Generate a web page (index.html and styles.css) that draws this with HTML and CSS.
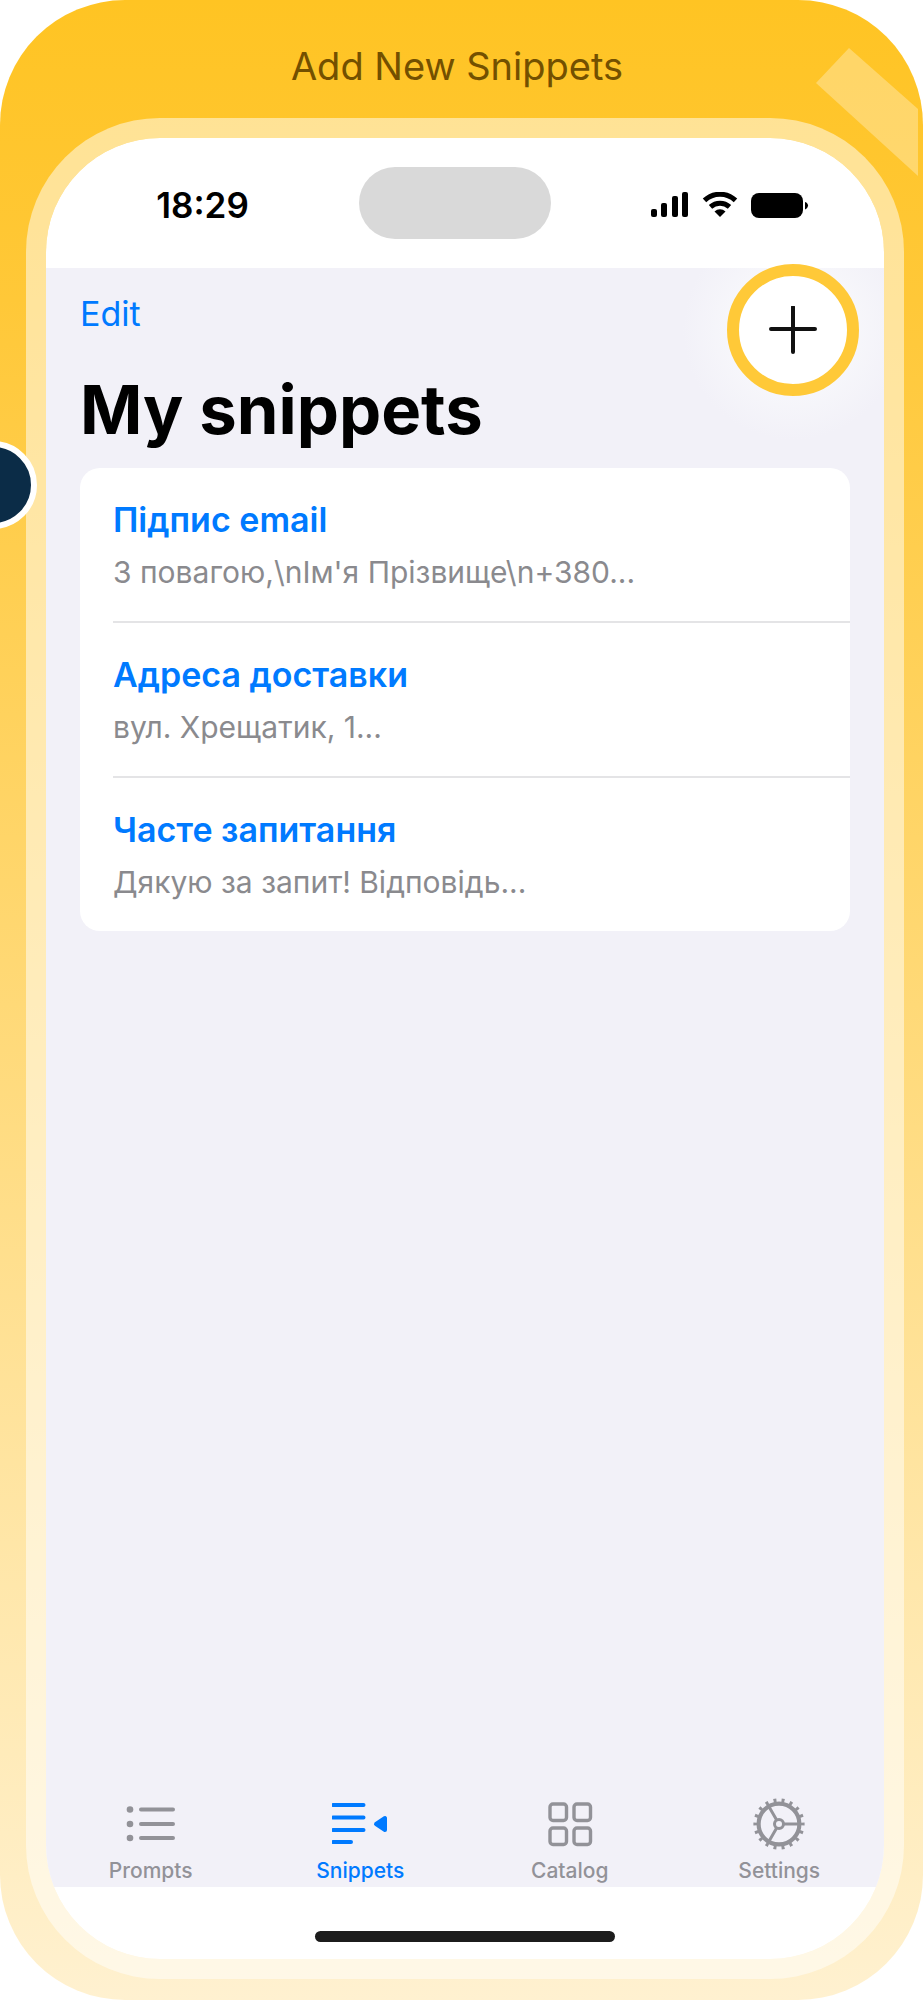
FILE: index.html
```html
<!DOCTYPE html>
<html lang="uk">
<head>
    <meta charset="utf-8">
    <meta name="viewport" content="width=device-width, initial-scale=1">
    <title>Add New Snippets</title>
    <link rel="stylesheet" href="styles.css">
</head>
<body>
    <div class="card">
        <div class="card-title">Add New Snippets</div>

        <svg class="tape" viewBox="0 0 102 128" aria-hidden="true">
            <path d="M33 0L102 61V128L0 35Z" fill="#fff" fill-opacity=".3"/>
        </svg>
        <div class="side-dot"></div>

        <div class="phone">
            <div class="status-bar">
                <span class="time">18:29</span>
                <span class="island"></span>
                <div class="status-icons">
                    <svg width="38" height="26" viewBox="0 0 38 26">
                        <rect x="0" y="17" width="6" height="8" rx="2"/>
                        <rect x="10" y="11" width="6" height="14" rx="2"/>
                        <rect x="21" y="4" width="6" height="21" rx="2"/>
                        <rect x="31" y="0" width="6" height="25" rx="2"/>
                    </svg>
                    <svg width="36" height="26" viewBox="0 0 36 26">
                        <path d="M2.5 8.4A22.5 22.5 0 0 1 33.5 8.4M8.5 14.8A14.2 14.2 0 0 1 27.5 14.8" fill="none" stroke="#000" stroke-width="5"/>
                        <path d="M18 25L12.5 19.5A8 8 0 0 1 23.5 19.5Z"/>
                    </svg>
                    <svg width="58" height="26" viewBox="0 0 58 26">
                        <rect x="0" y="1" width="52" height="25" rx="8"/>
                        <path d="M54 10C56 10.5 57 12 57 13.500S56 16.5 54 17.5Z"/>
                    </svg>
                </div>
            </div>

            <main class="screen">
                <button class="add-button" aria-label="Add snippet">
                    <svg width="48" height="48" viewBox="0 0 48 48">
                        <path d="M24 1V46M2 23H46" stroke="#111" stroke-width="4" stroke-linecap="round"/>
                    </svg>
                </button>
                <button class="edit-button">Edit</button>
                <h1>My snippets</h1>
                <ul class="snippets">
                    <li>
                        <a href="#">Підпис email</a>
                        <p>З повагою,\nІм'я Прізвище\n+380...</p>
                    </li>
                    <li>
                        <a href="#">Адреса доставки</a>
                        <p>вул. Хрещатик, 1...</p>
                    </li>
                    <li>
                        <a href="#">Часте запитання</a>
                        <p>Дякую за запит! Відповідь...</p>
                    </li>
                </ul>

                <nav class="tabs">
                    <a href="#">
                        <svg viewBox="0 0 56 56">
                            <g fill="currentColor"><circle cx="7" cy="13.5" r="3.3"/><circle cx="7" cy="28" r="3.3"/><circle cx="7" cy="42" r="3.3"/></g>
                            <path d="M18 13.5H50M18 28H50M18 42H50" stroke="currentColor" stroke-width="4" stroke-linecap="round"/>
                        </svg>
                        Prompts
                    </a>
                    <a href="#" class="active">
                        <svg viewBox="0 0 56 56">
                            <path d="M1 9H31.5M1 21.5H31.5M1 34H31.5M1 46H19" stroke="currentColor" stroke-width="4" stroke-linecap="round"/>
                            <path d="M44 28L53 22V34Z" fill="currentColor" stroke="currentColor" stroke-width="4" stroke-linejoin="round"/>
                        </svg>
                        Snippets
                    </a>
                    <a href="#">
                        <svg viewBox="0 0 56 56" fill="none" stroke="currentColor" stroke-width="3.4">
                            <rect x="8" y="8" width="16.5" height="16.5" rx="3"/>
                            <rect x="32" y="8" width="16.5" height="16.5" rx="3"/>
                            <rect x="8" y="32" width="16.5" height="16.5" rx="3"/>
                            <rect x="32" y="32" width="16.5" height="16.5" rx="3"/>
                        </svg>
                        Catalog
                    </a>
                    <a href="#">
                        <svg viewBox="0 0 56 56" fill="none" stroke="currentColor" stroke-width="3">
                            <circle cx="28" cy="28" r="20.4" stroke-width="4.200"/>
                            <circle cx="28" cy="28" r="23.7" stroke-width="3.800" pathLength="180" stroke-dasharray="3.600 6.400" stroke-dashoffset="1.800"/>
                            <circle cx="28" cy="28" r="4.5"/>
                            <path d="M33 28H47M25.5 23.7L18 10.7M25.5 32.3L18 45.3"/>
                        </svg>
                        Settings
                    </a>
                </nav>
            </main>

            <div class="home-area"><span class="home-bar"></span></div>
        </div>
    </div>
</body>
</html>
```
FILE: styles.css
```css
* {
    box-sizing: border-box;
}

body {
    margin: 0;
    background-color: #fff;
    font-family: Inter, "Noto Sans", sans-serif;
}

h1, p, ul {
    margin: 0;
    padding: 0;
}

button {
    font-family: inherit;
    border: none;
    padding: 0;
    cursor: pointer;
}

a {
    text-decoration: none;
}

.card {
    position: relative;
    overflow: hidden;
    display: flex;
    flex-direction: column;
    min-height: 100vh;
    padding: 0 19px 21px 26px;
    border-radius: 125px;
    background: linear-gradient(#ffc423, #ffc838 15%, #fff1d0);
}

.card-title {
    padding: 42px 16px 28px 0;
    font-size: 38px;
    line-height: 48px;
    text-align: center;
    color: #735000;
}

.tape {
    position: absolute;
    top: 48px;
    right: 5px;
    width: 102px;
}

.side-dot {
    position: absolute;
    z-index: 1;
    top: 441px;
    left: -51px;
    width: 88px;
    height: 88px;
    border: 6px solid #fff;
    border-radius: 50%;
    background-color: #0b2c47;
}

.phone {
    flex: 1;
    display: flex;
    flex-direction: column;
    overflow: hidden;
    border: 20px solid rgba(255, 255, 255, 0.5);
    border-radius: 134px;
    background-color: #fff;
    background-clip: padding-box;
}

/* status bar */
.status-bar {
    display: grid;
    grid-template-columns: 1fr 192px 1fr;
    align-items: center;
    height: 130px;
    padding-right: 20px;
}

.time {
    justify-self: center;
    padding-top: 4px;
    font-size: 35px;
    font-weight: 600;
}

.island {
    height: 72px;
    border-radius: 36px;
    background-color: #d9d9d9;
}

.status-icons {
    display: flex;
    justify-self: end;
    gap: 13px;
    padding: 4px 55px 0 0;
}

/* screen */
.screen {
    position: relative;
    flex: 1;
    display: flex;
    flex-direction: column;
    align-items: flex-start;
    padding: 24px 34px 0;
    background: radial-gradient(circle at calc(100% - 91px) 62px, #f7f7fb 60px, #f2f1f8 110px);
}

.add-button {
    position: absolute;
    top: -4px;
    right: 25px;
    display: flex;
    align-items: center;
    justify-content: center;
    width: 132px;
    height: 132px;
    border: 12px solid #ffc938;
    border-radius: 50%;
    background-color: #fff;
}

.edit-button {
    background: none;
    color: #007aff;
    font-size: 34px;
    line-height: 44px;
}

h1 {
    margin: 34px 0 18px;
    font-size: 67px;
    line-height: 80px;
}

.snippets {
    width: 100%;
    padding-left: 33px;
    border-radius: 20px;
    background-color: #fff;
    list-style: none;
}

.snippets li {
    padding: 30px 0 29px;
}

.snippets li + li {
    border-top: 2px solid #e4e4e6;
}

.snippets a {
    display: block;
    color: #007aff;
    font-size: 34px;
    font-weight: 600;
    line-height: 44px;
}

.snippets p {
    margin-top: 10px;
    color: #8a8a8e;
    font-size: 30px;
    line-height: 40px;
}

/* bottom tabs */
.tabs {
    align-self: stretch;
    display: grid;
    grid-template-columns: repeat(4, 1fr);
    margin: auto -34px 0;
    padding-bottom: 3px;
}

.tabs a {
    display: flex;
    flex-direction: column;
    align-items: center;
    gap: 6px;
    color: #929298;
    font-size: 21px;
    font-weight: 500;
    line-height: 26px;
}

.tabs .active {
    color: #007aff;
}

.tabs svg {
    width: 56px;
    height: 56px;
}

.home-area {
    display: flex;
    justify-content: center;
    padding: 44px 0 17px;
}

.home-bar {
    width: 300px;
    height: 11px;
    border-radius: 6px;
    background-color: #1c1c1c;
}
```
